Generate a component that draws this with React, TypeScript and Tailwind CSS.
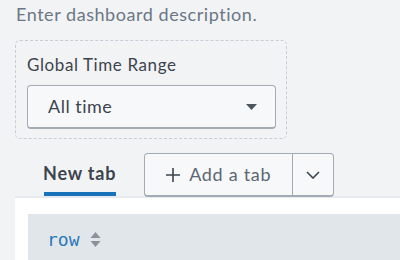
import React from 'react';

const font = { fontFamily: 'Lato, "Open Sans", Arial, sans-serif' };

const App: React.FC = () => {
  return (
    <div className="w-[400px] h-[260px] overflow-hidden bg-[#f2f3f5]" style={font}>
      {/* Description */}
      <p className="pl-4 pt-[2px] text-[18px] leading-[24px] tracking-[0.55px] text-[#6b7785]">Enter dashboard description.</p>

      {/* Global input panel */}
      <div className="ml-[15px] mt-[14px] w-[272px] h-[99px] border border-dashed border-[#c7cdd4] rounded-[5px] px-[11px] pt-[13px]">
        <div className="text-[17px] leading-[22px] tracking-[0.6px] text-[#3c444d]">Global Time Range</div>
        <button className="mt-[9px] w-[249px] h-[44px] flex items-center justify-between pl-[20px] pr-[18px] bg-[#f7f8fa] border border-[#a3abb4] border-b-2 rounded-[4px] text-[18px] tracking-[0.5px] text-[#3c444d]">
          <span>All time</span>
          <svg width="11" height="6" viewBox="0 0 11 6">
            <path d="M0 0h11L5.5 6z" fill="#4d565f" />
          </svg>
        </button>
      </div>

      {/* Tabs */}
      <div className="flex items-end mt-[13px] pl-[28px] h-[44px]">
        <div className="flex flex-col items-center px-[15px]">
          <span className="text-[18px] font-bold leading-[22px] tracking-[0.8px] text-[#3c444d]">New tab</span>
          <span className="mt-[8px] h-[4px] w-[72px] bg-[#1a72bb]" />
        </div>
        <div className="ml-[13px] mb-[-1px] flex h-[44px] bg-[#f7f8fa] border border-[#a3abb4] border-b-2 rounded-[4px] text-[#3c444d]">
          <button className="w-[147px] flex items-center justify-center gap-[9px] text-[18px] tracking-[0.7px]">
            <svg width="14" height="14" viewBox="0 0 14 14">
              <path d="M7 0v14M0 7h14" stroke="#3c444d" strokeWidth="1.6" />
            </svg>
            <span className="text-[#5c6773]">Add a tab</span>
          </button>
          <div className="w-px bg-[#a3abb4]" />
          <button className="w-[40px] flex items-center justify-center">
            <svg width="14" height="8" viewBox="0 0 14 8">
              <path d="M1 1l6 6 6-6" fill="none" stroke="#3c444d" strokeWidth="1.6" />
            </svg>
          </button>
        </div>
      </div>

      {/* Canvas */}
      <div className="ml-[15px] h-[80px] bg-white border-t-2 border-[#e6e9ed] pl-[13px] pt-[16px]">
        <div className="h-[60px] bg-[#e1e6eb] flex items-center pl-[19px] pb-[10px] gap-[10px]">
          <span className="text-[18px] text-[#2a7ab8]" style={{ fontFamily: '"DejaVu Sans Mono", monospace' }}>row</span>
          <svg width="11" height="17" viewBox="0 0 11 17">
            <path d="M5.5 1l5 6h-10z" fill="#8a939c" />
            <path d="M5.5 16l5-6h-10z" fill="#8a939c" />
          </svg>
        </div>
      </div>
    </div>
  );
};

export default App;
